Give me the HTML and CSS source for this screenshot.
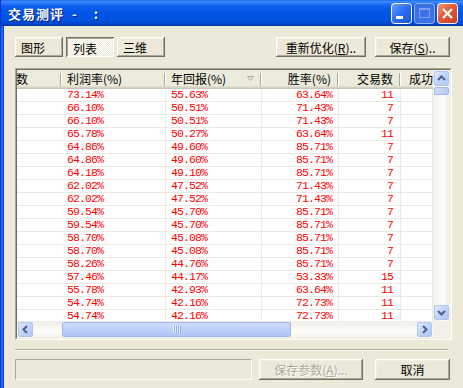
FILE: index.html
```html
<!DOCTYPE html>
<html lang="zh-CN">

<head>
  <meta charset="UTF-8" />
  <title>交易测评</title>
  <link rel="stylesheet" href="styles.css">
</head>

<body>
  <div class="window">
    <div class="titlebar">
      <div class="title">交易测评<span class="t-dash">-</span><span class="t-colon">:</span></div>
      <div class="caption-btns">
        <svg class="cap" width="21" height="21" viewBox="0 0 21 21">
          <defs>
            <linearGradient id="gMin" x1="0" y1="0" x2="1" y2="1">
              <stop offset="0" stop-color="#6AA2FF" />
              <stop offset="0.5" stop-color="#2B6CF0" />
              <stop offset="1" stop-color="#1B55D8" />
            </linearGradient>
          </defs>
          <rect x="0.5" y="0.5" width="20" height="20" rx="3" fill="url(#gMin)" stroke="#fff" />
          <rect x="5" y="13" width="7" height="3" fill="#fff" />
        </svg>
        <svg class="cap" width="21" height="21" viewBox="0 0 21 21">
          <rect x="0.5" y="0.5" width="20" height="20" rx="3" fill="#3D72E6" stroke="#8FB0F5" />
          <rect x="5.5" y="5.5" width="10" height="9" fill="none" stroke="#7D9FEE" />
          <rect x="5" y="5" width="11" height="2" fill="#7D9FEE" />
        </svg>
        <svg class="cap" width="21" height="21" viewBox="0 0 21 21">
          <defs>
            <linearGradient id="gClose" x1="0" y1="0" x2="1" y2="1">
              <stop offset="0" stop-color="#F29A7C" />
              <stop offset="0.45" stop-color="#E05A3A" />
              <stop offset="1" stop-color="#C63E1F" />
            </linearGradient>
          </defs>
          <rect x="0.5" y="0.5" width="20" height="20" rx="3" fill="url(#gClose)" stroke="#fff" />
          <path d="M6 6 L15 15 M15 6 L6 15" stroke="#fff" stroke-width="2.2" />
        </svg>
      </div>
    </div>

    <div class="client">
      <div class="toolbar">
        <div class="tabs">
          <button class="btn tab">图形</button>
          <button class="btn tab pressed">列表</button>
          <button class="btn tab">三维</button>
        </div>
        <div class="actions">
          <button class="btn reopt">重新优化(<u>R</u>)..</button>
          <button class="btn save">保存(<u>S</u>)..</button>
        </div>
      </div>

      <div class="listview">
        <div class="lv-inner">
          <div class="view">
            <div class="row head">
              <span class="h0">数</span>
              <span>利润率(%)</span>
              <span class="sorted">年回报(%)<svg class="sort" width="7" height="5" viewBox="0 0 7 5"><path d="M0.5 0.5 H6.5 L3.5 4.5 Z" fill="none" stroke="#ACA899" /></svg></span>
              <span class="r">胜率(%)</span>
              <span class="r">交易数</span>
              <span class="h5">成功</span>
            </div>
            <div class="row"><span></span><span>73.14%</span><span>55.63%</span><span>63.64%</span><span>11</span><span></span></div>
            <div class="row"><span></span><span>66.10%</span><span>50.51%</span><span>71.43%</span><span>7</span><span></span></div>
            <div class="row"><span></span><span>66.10%</span><span>50.51%</span><span>71.43%</span><span>7</span><span></span></div>
            <div class="row"><span></span><span>65.78%</span><span>50.27%</span><span>63.64%</span><span>11</span><span></span></div>
            <div class="row"><span></span><span>64.86%</span><span>49.60%</span><span>85.71%</span><span>7</span><span></span></div>
            <div class="row"><span></span><span>64.86%</span><span>49.60%</span><span>85.71%</span><span>7</span><span></span></div>
            <div class="row"><span></span><span>64.18%</span><span>49.10%</span><span>85.71%</span><span>7</span><span></span></div>
            <div class="row"><span></span><span>62.02%</span><span>47.52%</span><span>71.43%</span><span>7</span><span></span></div>
            <div class="row"><span></span><span>62.02%</span><span>47.52%</span><span>71.43%</span><span>7</span><span></span></div>
            <div class="row"><span></span><span>59.54%</span><span>45.70%</span><span>85.71%</span><span>7</span><span></span></div>
            <div class="row"><span></span><span>59.54%</span><span>45.70%</span><span>85.71%</span><span>7</span><span></span></div>
            <div class="row"><span></span><span>58.70%</span><span>45.08%</span><span>85.71%</span><span>7</span><span></span></div>
            <div class="row"><span></span><span>58.70%</span><span>45.08%</span><span>85.71%</span><span>7</span><span></span></div>
            <div class="row"><span></span><span>58.26%</span><span>44.76%</span><span>85.71%</span><span>7</span><span></span></div>
            <div class="row"><span></span><span>57.46%</span><span>44.17%</span><span>53.33%</span><span>15</span><span></span></div>
            <div class="row"><span></span><span>55.78%</span><span>42.93%</span><span>63.64%</span><span>11</span><span></span></div>
            <div class="row"><span></span><span>54.74%</span><span>42.16%</span><span>72.73%</span><span>11</span><span></span></div>
            <div class="row"><span></span><span>54.74%</span><span>42.16%</span><span>72.73%</span><span>11</span><span></span></div>
          </div>

          <div class="vscroll">
            <span class="sb-btn"><svg width="15" height="15" viewBox="0 0 15 15"><path d="M4 9 L7.5 5.5 L11 9" fill="none" stroke="#4D6185" stroke-width="2" /></svg></span>
            <span class="thumb v-thumb"></span>
            <span class="sb-track"></span>
            <span class="sb-btn"><svg width="15" height="15" viewBox="0 0 15 15"><path d="M4 6 L7.5 9.5 L11 6" fill="none" stroke="#4D6185" stroke-width="2" /></svg></span>
          </div>

          <div class="hscroll">
            <span class="sb-btn"><svg width="15" height="15" viewBox="0 0 15 15"><path d="M9 4 L5.5 7.5 L9 11" fill="none" stroke="#4D6185" stroke-width="2" /></svg></span>
            <span class="h-track">
              <span class="thumb h-thumb"><span class="grip"></span></span>
            </span>
            <span class="sb-btn"><svg width="15" height="15" viewBox="0 0 15 15"><path d="M6 4 L9.5 7.5 L6 11" fill="none" stroke="#4D6185" stroke-width="2" /></svg></span>
          </div>

          <div class="corner"></div>
        </div>
      </div>

      <div class="separator"></div>

      <div class="footer">
        <div class="status"></div>
        <button class="btn disabled">保存参数(<u>A</u>)...</button>
        <button class="btn cancel">取消</button>
      </div>
    </div>
  </div>
</body>

</html>
```

FILE: styles.css
```css
* {
  box-sizing: border-box;
  margin: 0;
  padding: 0;
}

body {
  width: 463px;
  height: 388px;
  overflow: hidden;
  background: #ECE9D8;
  color: #000;
  font-family: "Noto Sans CJK SC", "Liberation Sans", sans-serif;
  font-size: 12px;
}

.window {
  height: 388px;
  display: flex;
  flex-direction: column;
}

/* title bar */
.titlebar {
  flex: none;
  height: 26px;
  display: flex;
  align-items: center;
  justify-content: space-between;
  padding: 0 5px 0 7px;
  background: linear-gradient(#0B5AD6 0, #3E8DFF 1px, #2C7BFA 3px, #0D60EE 6px, #0055E5 12px, #0152E0 20px, #0045CC 24px, #00399F 26px);
  border-left: 1px solid #0831D9;
}

.title {
  display: flex;
  color: #fff;
  font-weight: bold;
  font-size: 13px;
  letter-spacing: 1px;
  text-shadow: 1px 1px #0A1E6A;
}

.t-dash {
  margin-left: 8px;
}

.t-colon {
  margin-left: 16px;
}

.caption-btns {
  display: flex;
  gap: 2px;
}

.cap {
  display: block;
}

/* client area */
.client {
  flex: 1;
  display: flex;
  flex-direction: column;
  padding: 11px 11px 0 15px;
  background: linear-gradient(90deg, #0831D9 0 1px, #1769F0 1px 3px, #0048D8 3px 4px, #ECE9D8 4px);
}

.btn {
  height: 20px;
  display: flex;
  align-items: center;
  justify-content: center;
  background: #ECE9D8;
  border: none;
  color: #000;
  font: inherit;
  box-shadow: inset -1px -1px #716F64, inset 1px 1px #fff, inset -2px -2px #ACA899, inset 2px 2px #F1EFE2;
}

.btn u {
  text-decoration: underline;
}

.toolbar {
  flex: none;
  display: flex;
  justify-content: space-between;
  padding-right: 2px;
}

.tabs {
  display: flex;
  gap: 3px;
}

.tab {
  width: 48px;
  justify-content: flex-start;
  padding-left: 6px;
}

.tab.pressed {
  padding: 2px 0 0 7px;
  background: repeating-conic-gradient(#fff 0 25%, #ECE9D8 0 50%) 0 0 / 2px 2px;
  box-shadow: inset 1px 1px #716F64, inset -1px -1px #fff, inset 2px 2px #ACA899, inset -2px -2px #F1EFE2;
}

.actions {
  display: flex;
  gap: 9px;
}

.reopt {
  width: 90px;
}

.save {
  width: 75px;
}

/* list view */
.listview {
  flex: none;
  margin-top: 11px;
  height: 272px;
  border: 1px solid;
  border-color: #ACA899 #fff #fff #ACA899;
}

.lv-inner {
  height: 100%;
  display: grid;
  grid-template-columns: 416px 17px;
  grid-template-rows: 251px 17px;
  border: 1px solid;
  border-color: #716F64 #F1EFE2 #F1EFE2 #716F64;
}

.view {
  overflow: hidden;
  background: #fff;
}

.row {
  display: grid;
  grid-template-columns: 45px 104px 96px 77px 62px 32px;
  height: 13px;
  border-bottom: 1px solid #ECEAE0;
}

.row > span {
  display: block;
  overflow: hidden;
  white-space: nowrap;
  border-right: 1px solid #ECEAE0;
  padding-left: 5px;
  color: #f00;
  font-family: "Liberation Mono", monospace;
  font-size: 11.5px;
  line-height: 12px;
  letter-spacing: -0.9px;
}

.row > span:first-child {
  border-right-color: transparent;
}

.row > span:nth-child(4) {
  text-align: right;
  padding-right: 6px;
}

.row > span:nth-child(5) {
  text-align: right;
  padding-right: 7px;
}

.row.head {
  height: 19px;
  border-bottom: none;
  background: #EBEADB;
  box-shadow: inset 0 -1px #CBC7B8, inset 0 -2px #D6D2C2, inset 0 -3px #E2DECD;
}

.row.head > span {
  display: flex;
  align-items: center;
  color: #000;
  font-family: "Noto Sans CJK SC", "Liberation Sans", sans-serif;
  font-size: 12px;
  line-height: 16px;
  letter-spacing: 0;
  padding-bottom: 2px;
  border-right: none;
  background: linear-gradient(#ACA899, #ACA899) right 1px top 3px / 1px 13px no-repeat,
    linear-gradient(#fff, #fff) right 0 top 3px / 1px 13px no-repeat;
}

.row.head > span.r {
  justify-content: flex-end;
  padding-right: 8px;
}

.row.head > .h0 {
  padding-left: 0;
  text-indent: -1px;
}

.row.head > .h5 {
  padding-left: 8px;
  background: none;
}

.sort {
  margin-left: auto;
  margin-right: 8px;
}

/* scroll bars */
.vscroll {
  display: flex;
  flex-direction: column;
  background: linear-gradient(90deg, #F3F1EA, #FDFDFA 60%, #EEEDE5);
}

.hscroll {
  display: flex;
  background: linear-gradient(#EEEDE5, #FDFDFA 60%, #F3F1EA);
}

.corner {
  background: #F1EFE6;
}

.sb-btn {
  flex: none;
  width: 15px;
  height: 15px;
  margin: 1px;
  border: 1px solid #B1C6F5;
  border-radius: 2px;
  background: linear-gradient(135deg, #E0E9FE, #C3D4FB 50%, #AFC5F6);
}

.sb-btn svg {
  display: block;
  margin: -1px;
}

.sb-track {
  flex: 1;
}

.thumb {
  flex: none;
  border: 1px solid #A2B8EC;
  border-radius: 2px;
}

.v-thumb {
  height: 8px;
  margin: 0 1px;
  background: linear-gradient(90deg, #CFDCFD, #B9CCF9);
}

.h-track {
  flex: 1;
  display: flex;
}

.h-thumb {
  width: 229px;
  height: 15px;
  margin: 1px 0 0 28px;
  display: flex;
  align-items: center;
  justify-content: center;
  background: linear-gradient(#CFDCFD, #BACDF9 60%, #AFC3F5);
}

.grip {
  width: 8px;
  height: 7px;
  background: repeating-linear-gradient(90deg, #EEF4FE 0 1px, #8CA9EC 1px 2px);
}

/* bottom */
.separator {
  flex: none;
  width: 433px;
  margin-top: 9px;
  height: 2px;
  border-top: 1px solid #ACA899;
  border-bottom: 1px solid #fff;
}

.footer {
  flex: none;
  display: flex;
  margin-top: 8px;
}

.footer .btn {
  height: 21px;
}

.status {
  width: 237px;
  height: 21px;
  border: 1px solid;
  border-color: #ACA899 #fff #fff #ACA899;
}

.btn.disabled {
  width: 104px;
  margin-left: 7px;
  color: #ACA899;
  text-shadow: 1px 1px #fff;
}

.cancel {
  width: 75px;
  margin-left: 12px;
}
```
